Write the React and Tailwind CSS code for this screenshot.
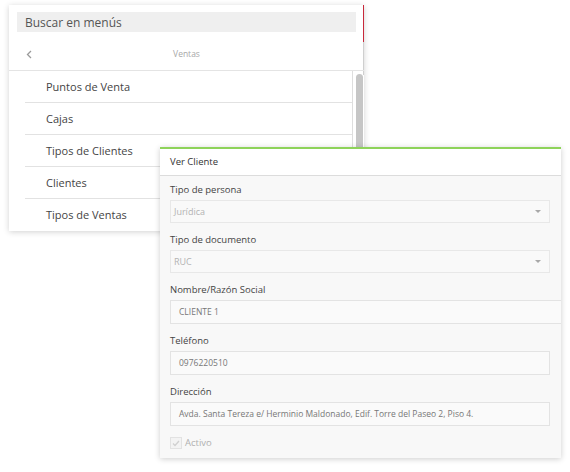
const menuItems = ['Puntos de Venta', 'Cajas', 'Tipos de Clientes', 'Clientes', 'Tipos de Ventas'];

const Caret = () => (
  <svg width="6" height="3" viewBox="0 0 6 3">
    <path d="M0 0h6L3 3z" fill="#a8a8a8" />
  </svg>
);

const Field = ({ label, children }) => (
  <div className="mb-[10px]">
    <div className="h-[14px] text-[9.5px] leading-[14px] text-[#444]">{label}</div>
    <div className="mt-[3px]">{children}</div>
  </div>
);

const SelectBox = ({ value }) => (
  <div className="flex h-[23px] w-[380px] items-center justify-between border border-[#e8e8e8] bg-[#f9f9f9] pl-[3px] pr-[8px] text-[9px] text-[#b3b3b3]">
    <span>{value}</span>
    <Caret />
  </div>
);

const TextBox = ({ value, wide }) => (
  <div
    className={`flex h-[24px] items-center border border-[#e3e3e3] bg-[#fafafa] pl-[8px] text-[8.5px] text-[#777] ${
      wide ? 'w-[395px]' : 'w-[380px]'
    }`}
  >
    {value}
  </div>
);

const MenuPanel = () => (
  <div className="relative ml-[9px] mt-[5px] w-[355px] bg-white pt-[7px] shadow-[0_1px_6px_rgba(0,0,0,0.18)]">
    <span className="absolute right-0 top-0 h-[37px] w-px bg-[#c8283a]" />
    <span className="absolute right-0 top-[37px] h-[33px] w-px bg-[#cfcfcf]" />
    <div className="mx-[8px] flex h-[20px] items-center bg-[#efefef] pl-[8px] pt-[2px] text-[12px] text-[#555]">
      Buscar en menús
    </div>
    <div className="relative flex h-[39px] items-center justify-center border-b border-[#e4e4e4] pt-[6px]">
      <svg width="6" height="9" viewBox="0 0 6 9" className="absolute left-[17px] top-[18px]">
        <path d="M5 1L1.5 4.5 5 8" fill="none" stroke="#9a9a9a" strokeWidth="1.3" />
      </svg>
      <span className="text-[8.5px] text-[#a8a8a8]">Ventas</span>
    </div>
    <div className="flex">
      <ul className="ml-[16px] flex-1">
        {menuItems.map((item, i) => (
          <li
            key={item}
            className={`flex h-[32px] items-center pl-[21px] pt-[1px] text-[11px] text-[#444] ${
              i < menuItems.length - 1 ? 'border-b border-[#e2e2e2]' : ''
            }`}
          >
            {item}
          </li>
        ))}
      </ul>
      <div className="w-[12px] border-l border-[#dedede] pl-[3px] pt-[3px]">
        <div className="h-[150px] w-[7px] rounded-full bg-[#c6c6c6]" />
      </div>
    </div>
  </div>
);

const ClienteModal = () => (
  <div className="absolute left-[160px] top-[147px] w-[401px] overflow-hidden border-t-2 border-[#8ed35a] bg-[#f8f8f8] shadow-[0_1px_6px_rgba(0,0,0,0.2)]">
    <div className="flex h-[27px] items-center border-b border-[#dcdcdc] bg-white pl-[10px] text-[9.5px] text-[#333]">
      Ver Cliente
    </div>
    <div className="px-[10px] pt-[7px]">
      <Field label="Tipo de persona">
        <SelectBox value="Jurídica" />
      </Field>
      <Field label="Tipo de documento">
        <SelectBox value="RUC" />
      </Field>
      <Field label="Nombre/Razón Social">
        <TextBox value="CLIENTE 1" wide />
      </Field>
      <Field label="Teléfono">
        <TextBox value="0976220510" />
      </Field>
      <Field label="Dirección">
        <TextBox value="Avda. Santa Tereza e/ Herminio Maldonado, Edif. Torre del Paseo 2, Piso 4." />
      </Field>
      <label className="mt-[2px] flex h-[14px] items-center gap-[3px] text-[9.5px] text-[#b0b0b0]">
        <span className="flex h-[12px] w-[12px] items-center justify-center border border-[#e2e2e2] bg-[#f3f3f3]">
          <svg width="8" height="7" viewBox="0 0 8 7">
            <path d="M1 3.5L3 5.5 7 1" fill="none" stroke="#d0d0d0" strokeWidth="1.3" />
          </svg>
        </span>
        Activo
      </label>
      <div className="h-[8px]" />
    </div>
  </div>
);

export default function App() {
  return (
    <div className="relative h-[472px] w-[570px] overflow-hidden bg-white font-['Open_Sans',sans-serif]">
      <MenuPanel />
      <ClienteModal />
    </div>
  );
}
